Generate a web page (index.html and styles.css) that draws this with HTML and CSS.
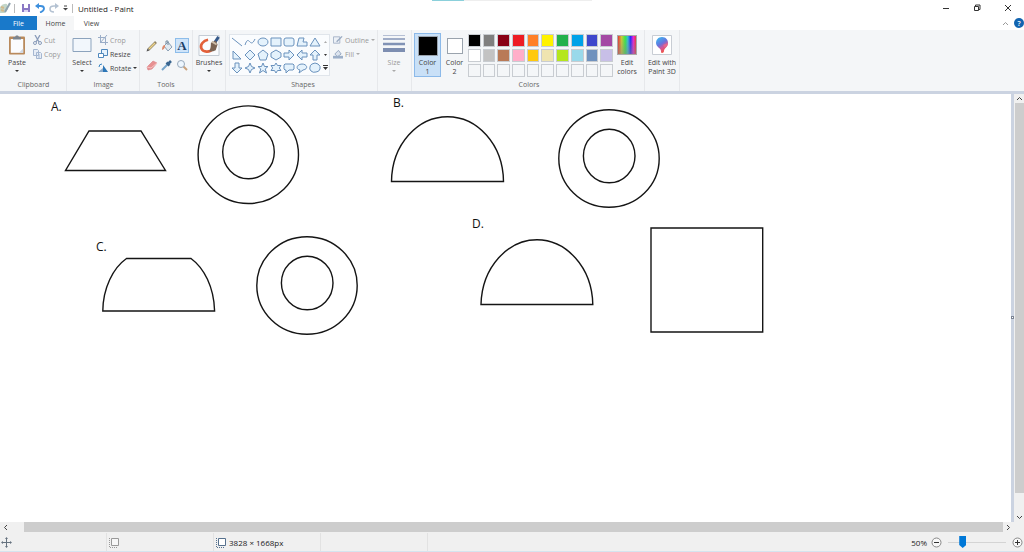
FILE: index.html
```html
<!DOCTYPE html>
<html lang="en">
<head>
<meta charset="utf-8">
<title>Untitled - Paint</title>
<link rel="stylesheet" href="styles.css">
</head>
<body>
<div class="app">
<header class="titlebar">
  <div class="quick">
    <svg class="logo" width="12" height="12" viewBox="0 0 12 12"><path d="M0 5q3-4 7-3l1 5-3 4H0z" fill="#c3d6c9"/><path d="M1 5l3 1M1 8l3 1" stroke="#d3b98a" stroke-width="2"/><path d="M5 10L10 1" stroke="#8fa3ae" stroke-width="2"/></svg>
    <span class="bar"></span>
    <button aria-label="Save"><svg width="10" height="10" viewBox="0 0 10 10"><path d="M1 1h8v8H1z" fill="#8a78c4"/><path d="M3 1h4v4H3z" fill="#fff"/><path d="M3 7h4v2H3z" fill="#ddd6f3"/></svg></button>
    <button aria-label="Undo"><svg width="10" height="10" viewBox="0 0 10 10"><path d="M3 3h2.500q3.500 0 3.500 2.500T5 9.500" fill="none" stroke="#3d8fdd" stroke-width="1.800"/><path d="M0 3l4-3v6z" fill="#3d8fdd"/></svg></button>
    <button aria-label="Redo"><svg width="10" height="10" viewBox="0 0 10 10"><path d="M7 3H5Q1 3 1 6t4 3" fill="none" stroke="#b4c2d2" stroke-width="1.600"/><path d="M10 3L6 0v6z" fill="#b4c2d2"/></svg></button>
    <button aria-label="Customize Quick Access Toolbar"><svg width="5" height="6" viewBox="0 0 5 6"><path d="M1 1h3" stroke="#444"/><path d="M0 3h5L2.500 5.500z" fill="#444"/></svg></button>
    <span class="bar"></span>
    <span class="title">Untitled - Paint</span>
  </div>
  <div class="loading"><i></i></div>
  <div class="window-buttons">
    <button aria-label="Minimize"><svg width="8" height="8"><path d="M1 4.500h6" stroke="#333"/></svg></button>
    <button aria-label="Restore"><svg width="8" height="8"><path d="M1.500 2.500h4v4h-4zM2.500 2V1h4.500v4.500H6" fill="none" stroke="#333"/></svg></button>
    <button aria-label="Close"><svg width="8" height="8"><path d="M1 1l6 6M7 1L1 7" stroke="#333"/></svg></button>
  </div>
</header>
<nav class="tabs">
  <button class="tab file">File</button>
  <button class="tab active">Home</button>
  <button class="tab">View</button>
  <span class="grow"></span>
  <button class="collapse" aria-label="Collapse ribbon"><svg width="7" height="5"><path d="M1 4l2.500-2.500L6 4" fill="none" stroke="#999"/></svg></button>
  <button class="help" aria-label="Help">?</button>
</nav>
<div class="ribbon">
  <section class="group clipboard">
    <div class="content">
      <button class="big"><svg width="18" height="20" viewBox="0 0 18 20"><rect x="1" y="1.500" width="16" height="18" rx="1" fill="#b98a5c"/><path d="M2.800 4h12.400v13.800H2.800z" fill="#fbfcfe"/><path d="M11 17.800l4.200-4.200v4.200z" fill="#cfd8e4"/><path d="M5 2h2l1-1.500h2L11 2h2v2.500H5z" fill="#7d858e"/></svg><span>Paste</span><i class="caret"></i></button>
      <div class="rows">
        <button class="row off"><svg width="9" height="10" viewBox="0 0 9 10"><path d="M2 0l4 7M7 0L3 7" stroke="#8a9cba" stroke-width="1.300"/><circle cx="2" cy="8" r="1.500" fill="none" stroke="#8a9cba"/><circle cx="7" cy="8" r="1.500" fill="none" stroke="#8a9cba"/></svg>Cut</button>
        <button class="row off"><svg width="9" height="10" viewBox="0 0 9 10"><path d="M.5.5h4l1 1v5h-5zM3.500 3.500h4l1 1v5h-5z" fill="#e7edf6" stroke="#a5b7d1"/><path d="M5 6h2M5 8h2" stroke="#a5b7d1"/></svg>Copy</button>
      </div>
    </div>
    <h2>Clipboard</h2>
  </section>
  <section class="group image">
    <div class="content">
      <button class="big"><svg width="20" height="20" viewBox="0 0 20 20"><path d="M1 3.500h18v13H1z" fill="#f2f7fc" stroke="#8ca3bd"/></svg><span>Select</span><i class="caret"></i></button>
      <div class="rows">
        <button class="row off"><svg width="10" height="10" viewBox="0 0 10 10"><path d="M2.500 0v7.500H10M0 2.500h7.500V10M2 8l7-8" fill="none" stroke="#9aadc7"/></svg>Crop</button>
        <button class="row"><svg width="10" height="10" viewBox="0 0 10 10"><path d="M3.500.5h6v6h-6z" fill="#e5f2fd" stroke="#4f88bd"/><path d="M.5 4.500h5v4h-5z" fill="#fff" stroke="#4f88bd"/></svg>Resize</button>
        <button class="row"><svg width="10" height="10" viewBox="0 0 10 10"><path d="M0 9h5V5z" fill="#8eaccb"/><path d="M5 9V2l5 7z" fill="#2c76b7"/><path d="M1 4q0-3 3-3" fill="none" stroke="#3682c1"/></svg>Rotate<i class="caret"></i></button>
      </div>
    </div>
    <h2>Image</h2>
  </section>
  <section class="group tools">
    <div class="content">
      <div class="tool-grid">
        <button aria-label="Pencil"><svg width="12" height="12" viewBox="0 0 12 12"><path d="M2.500 9.500L10 2" stroke="#8d8265" stroke-width="2.600"/><path d="M3 9l6-6" stroke="#edd38a" stroke-width="1.400"/><path d="M.5 11.500l1-3 2 2z" fill="#555"/></svg></button>
        <button aria-label="Fill with color"><svg width="12" height="12" viewBox="0 0 12 12"><path d="M3 6l4-4 4 5-4 4z" fill="#e1eaf2" stroke="#8ba0b5"/><path d="M5 4V1h2v4" fill="none" stroke="#758ba0"/><path d="M4 5Q1 5 1 10q2 0 3-3" fill="#dd8a6c"/></svg></button>
        <button class="selected" aria-label="Text"><span class="letter">A</span></button>
        <button aria-label="Eraser"><svg width="12" height="12" viewBox="0 0 12 12"><path d="M1 8l6-6 4 2-5 6-4 1z" fill="#e79192" stroke="#d98286" stroke-width=".6"/><path d="M1 8l4 1 6-5" fill="none" stroke="#f6c5c5"/></svg></button>
        <button aria-label="Color picker"><svg width="12" height="12" viewBox="0 0 12 12"><path d="M1 11l6-6" stroke="#75a4ca" stroke-width="2"/><path d="M5.500 3.500l3 3M7 5l3-3" stroke="#3a658f" stroke-width="2.600"/></svg></button>
        <button aria-label="Magnifier"><svg width="12" height="12" viewBox="0 0 12 12"><path d="M7 7l4 4" stroke="#c9a27c" stroke-width="2"/><circle cx="5" cy="5" r="3.500" fill="#edf6fe" stroke="#98a9bb"/></svg></button>
      </div>
    </div>
    <h2>Tools</h2>
  </section>
  <section class="group brushes">
    <div class="content">
      <button class="big"><svg width="22" height="22" viewBox="0 0 22 22"><path d="M.5.500h21v21H.5z" fill="#fafcfe" stroke="#c0c8d2"/><path d="M10 5C5 6 1.500 10 3 14s9 5 12 0" fill="none" stroke="#e2603a" stroke-width="2.800"/><path d="M17 8l4-6" stroke="#35598a" stroke-width="3"/><path d="M13 8l5-2 2 4-2 6q-4 2-7 1 2-2 2-9z" fill="#7b6453"/><path d="M14 7l5 3" stroke="#cdbda8" stroke-width="2"/></svg><span>Brushes</span><i class="caret"></i></button>
    </div>
  </section>
  <section class="group shapes">
    <div class="content">
      <div class="gallery">
        <div class="shape-grid">
          <button aria-label="Line"><svg viewBox="0 0 12 12"><path d="M1 2l10 8"/></svg></button>
          <button aria-label="Curve"><svg viewBox="0 0 12 12"><path class="open" d="M1 9C5-3 6 14 11 3"/></svg></button>
          <button aria-label="Oval"><svg viewBox="0 0 12 12"><ellipse cx="6" cy="6" rx="5" ry="4"/></svg></button>
          <button aria-label="Rectangle"><svg viewBox="0 0 12 12"><path d="M1 2h10v8H1z"/></svg></button>
          <button aria-label="Rounded rectangle"><svg viewBox="0 0 12 12"><rect x="1" y="2" width="10" height="8" rx="2"/></svg></button>
          <button aria-label="Polygon"><svg viewBox="0 0 12 12"><path d="M3 2h5L7 6h4v4H1z"/></svg></button>
          <button aria-label="Triangle"><svg viewBox="0 0 12 12"><path d="M6 2l5 8H1z"/></svg></button>
          <button aria-label="Right triangle"><svg viewBox="0 0 12 12"><path d="M2 2l8 8H2z"/></svg></button>
          <button aria-label="Diamond"><svg viewBox="0 0 12 12"><path d="M6 1l5 5-5 5-5-5z"/></svg></button>
          <button aria-label="Pentagon"><svg viewBox="0 0 12 12"><path d="M6 1l5 4-2 6H3L1 5z"/></svg></button>
          <button aria-label="Hexagon"><svg viewBox="0 0 12 12"><path d="M6 1l5 3v4l-5 3-5-3V4z"/></svg></button>
          <button aria-label="Right arrow"><svg viewBox="0 0 12 12"><path d="M1 4h5V1l5 5-5 5V8H1z"/></svg></button>
          <button aria-label="Left arrow"><svg viewBox="0 0 12 12"><path d="M11 4H6V1L1 6l5 5V8h5z"/></svg></button>
          <button aria-label="Up arrow"><svg viewBox="0 0 12 12"><path d="M4 11V6H1l5-5 5 5H8v5z"/></svg></button>
          <button aria-label="Down arrow"><svg viewBox="0 0 12 12"><path d="M4 1v5H1l5 5 5-5H8V1z"/></svg></button>
          <button aria-label="Four-point star"><svg viewBox="0 0 12 12"><path d="M6 1l1.500 3.500L11 6 7.500 7.500 6 11 4.500 7.500 1 6l3.500-1.500z"/></svg></button>
          <button aria-label="Five-point star"><svg viewBox="0 0 12 12"><path d="M6 1l1.500 3.500H11L8.200 7l1.300 4L6 8.500 2.500 11l1.300-4L1 4.500h3.500z"/></svg></button>
          <button aria-label="Six-point star"><svg viewBox="0 0 12 12"><path d="M6 1l1.500 2.500H11L9.300 6 11 8.500H7.500L6 11 4.500 8.500H1L2.700 6 1 3.500h3.500z"/></svg></button>
          <button aria-label="Rectangular callout"><svg viewBox="0 0 12 12"><path d="M2 2h8l1 1v4l-1 1H6l-3 3V8H2L1 7V3z"/></svg></button>
          <button aria-label="Oval callout"><svg viewBox="0 0 12 12"><path d="M4 8C-1 7 1 2 6 2s7 5 1 6l-4 3z"/></svg></button>
          <button aria-label="Cloud callout"><svg viewBox="0 0 12 12"><path d="M3 2q3-2 6 0 3 2 2 5-1 3-4 3-3 1-5-1-2-2-1-4 0-2 2-3z"/></svg></button>
        </div>
        <div class="gallery-scroll">
          <button aria-label="Scroll up"><svg width="3" height="2"><path d="M0 2h3L1.500 0z" fill="#aaa"/></svg></button>
          <button aria-label="Scroll down"><svg width="3" height="2"><path d="M0 0h3L1.500 2z" fill="#333"/></svg></button>
          <button aria-label="More shapes"><svg width="5" height="5"><path d="M0 .500h5" stroke="#333"/><path d="M0 2h5L2.500 5z" fill="#333"/></svg></button>
        </div>
      </div>
      <div class="rows">
        <button class="row off"><svg width="10" height="10" viewBox="0 0 11 10"><path d="M.5 1.500h7v7h-7z" fill="#edf1f7" stroke="#a3b2c7"/><path d="M4 7l6-6" stroke="#98a9c0" stroke-width="1.500"/></svg>Outline<i class="caret"></i></button>
        <button class="row off"><svg width="10" height="10" viewBox="0 0 11 10"><path d="M2 5l4-4 3 4-4 3z" fill="#dce4ef" stroke="#92a5bf"/><path d="M0 7h11v3H0z" fill="#9cafc9"/></svg>Fill<i class="caret"></i></button>
      </div>
    </div>
    <h2>Shapes</h2>
  </section>
  <section class="group size">
    <div class="content">
      <button class="big off"><svg width="22" height="20" viewBox="0 0 22 20"><path d="M0 .500h22" stroke="#b5bfd4"/><path d="M0 4h22" stroke="#8595b7" stroke-width="1.500"/><path d="M0 9h22" stroke="#8092b5" stroke-width="2.500"/><path d="M0 15h22" stroke="#7d8eb1" stroke-width="4"/></svg><span>Size</span><i class="caret"></i></button>
    </div>
  </section>
  <section class="group colors">
    <div class="content">
      <button class="big color chosen"><i class="ink black"></i><span>Color<br>1</span></button>
      <button class="big color"><i class="ink white"></i><span>Color<br>2</span></button>
      <div class="palette">
        <button class="c-black" aria-label="Black"></button><button class="c-gray" aria-label="Gray"></button><button class="c-darkred" aria-label="Dark red"></button><button class="c-red" aria-label="Red"></button><button class="c-orange" aria-label="Orange"></button><button class="c-yellow" aria-label="Yellow"></button><button class="c-green" aria-label="Green"></button><button class="c-turquoise" aria-label="Turquoise"></button><button class="c-indigo" aria-label="Indigo"></button><button class="c-purple" aria-label="Purple"></button>
        <button class="c-white" aria-label="White"></button><button class="c-silver" aria-label="Light gray"></button><button class="c-brown" aria-label="Brown"></button><button class="c-rose" aria-label="Rose"></button><button class="c-gold" aria-label="Gold"></button><button class="c-cream" aria-label="Light yellow"></button><button class="c-lime" aria-label="Lime"></button><button class="c-sky" aria-label="Light turquoise"></button><button class="c-steel" aria-label="Blue-gray"></button><button class="c-lavender" aria-label="Lavender"></button>
        <button aria-label="Custom 1"></button><button aria-label="Custom 2"></button><button aria-label="Custom 3"></button><button aria-label="Custom 4"></button><button aria-label="Custom 5"></button><button aria-label="Custom 6"></button><button aria-label="Custom 7"></button><button aria-label="Custom 8"></button><button aria-label="Custom 9"></button><button aria-label="Custom 10"></button>
      </div>
      <button class="big edit"><i class="spectrum"></i><span>Edit<br>colors</span></button>
    </div>
    <h2>Colors</h2>
  </section>
  <section class="group paint3d">
    <div class="content">
      <button class="big"><svg width="20" height="20" viewBox="0 0 20 20"><defs><linearGradient id="drop" x1="0" y1="0" x2=".5" y2="1"><stop offset="0" stop-color="#35c4f3"/><stop offset=".5" stop-color="#6575df"/><stop offset=".75" stop-color="#d95395"/><stop offset="1" stop-color="#ee5545"/></linearGradient></defs><path d="M.5.500h19v19H.5z" fill="#fff" stroke="#c8cdd4"/><path d="M10 2c4 0 6 3 6 6 0 4-4 5-4 8 0 1-1 2-2 2s-1-1-1-2c0-3-5-4-5-8 0-3 2-6 6-6z" fill="url(#drop)"/><path d="M11 10l5-2q0 3-3 5z" fill="#e4688d"/></svg><span>Edit with<br>Paint 3D</span></button>
    </div>
  </section>
</div>
<main class="workspace">
  <svg class="drawing" role="img" aria-label="Drawing with figures A, B, C and D">
    <g class="figures">
      <path d="M89 37H141L165.500 76.500H65.500Z"/>
      <ellipse cx="248.300" cy="60.700" rx="50.200" ry="48.800"/>
      <ellipse cx="248.500" cy="58" rx="25.800" ry="26.800"/>
      <path d="M391.500 87.500C392 50 418 22.800 447.500 22.800S503 50 503.500 87.500Z"/>
      <ellipse cx="609" cy="64.500" rx="50.200" ry="48.800"/>
      <ellipse cx="609.200" cy="62" rx="25.800" ry="26.800"/>
      <path d="M126.500 164.500H191C204 174 214 193 214.600 217H102.800C103 194 113 174 126.500 164.500Z"/>
      <ellipse cx="307" cy="191.500" rx="50.200" ry="48.800"/>
      <ellipse cx="307.200" cy="189" rx="25.800" ry="26.800"/>
      <path d="M481 210.500C482 173 508 145.800 537 145.800S592 173 592.800 210.500Z"/>
      <path d="M651 134H762.700V238H651Z"/>
    </g>
    <g class="letters"><text x="51" y="17">A.</text><text x="393" y="13">B.</text><text x="96" y="157">C.</text><text x="472" y="134">D.</text></g>
  </svg>
  <div class="edge"><i class="handle"></i></div>
  <div class="vscroll">
    <button aria-label="Scroll up"><svg width="7" height="5"><path d="M1 4l2.500-2.500L6 4" fill="none" stroke="#444"/></svg></button>
    <div class="thumb"></div>
    <button aria-label="Scroll down"><svg width="7" height="5"><path d="M1 1l2.500 2.500L6 1" fill="none" stroke="#444"/></svg></button>
  </div>
</main>
<div class="hscroll">
  <button aria-label="Scroll left"><svg width="5" height="7"><path d="M4 1L1.500 3.500 4 6" fill="none" stroke="#444"/></svg></button>
  <div class="thumb"></div>
  <button aria-label="Scroll right"><svg width="5" height="7"><path d="M1 1l2.500 2.500L1 6" fill="none" stroke="#444"/></svg></button>
</div>
<footer class="status">
  <div class="cell pointer"><svg width="11" height="11" viewBox="0 0 11 11"><path d="M5.500 1v9M1 5.500h9" stroke="#66727f"/><path d="M5.500 0L7 2H4zM5.500 11L7 9H4zM0 5.500L2 4v3zM11 5.500L9 4v3z" fill="#66727f"/></svg></div>
  <div class="cell selection"><svg width="11" height="11" viewBox="0 0 11 11"><path d="M2.500 1.500h7v7h-7z" fill="#f7f7f7" stroke="#999"/><path d="M.5 1v9.500H9" fill="none" stroke="#999" stroke-dasharray="1 1"/></svg></div>
  <div class="cell dimensions"><svg width="11" height="11" viewBox="0 0 11 11"><path d="M2.500 1.500h7v7h-7z" fill="#fff" stroke="#56718e"/><path d="M.5 1v9.500H9" fill="none" stroke="#56718e" stroke-dasharray="1 1"/></svg><span>3828 × 1668px</span></div>
  <div class="cell filesize"></div>
  <div class="zoom">
    <label for="zoom">50%</label>
    <button aria-label="Zoom out"><svg width="11" height="11"><circle cx="5.500" cy="5.500" r="4.500" fill="#f8f8f8" stroke="#888"/><path d="M3 5.500h5" stroke="#333"/></svg></button>
    <input id="zoom" type="range" min="0" max="100" value="22">
    <button aria-label="Zoom in"><svg width="11" height="11"><circle cx="5.500" cy="5.500" r="4.500" fill="#f8f8f8" stroke="#888"/><path d="M3 5.500h5M5.500 3v5" stroke="#333"/></svg></button>
  </div>
</footer>
</div>
</body>
</html>
```
FILE: styles.css
```css
* { box-sizing: border-box; }
body { margin: 0; background: #fff; color: #444; font: 7px/9px "Open Sans", "Noto Sans", sans-serif; }
button { display: flex; align-items: center; justify-content: center; margin: 0; padding: 0; border: 0; background: none; color: inherit; font: inherit; }
svg { display: block; flex: none; }
.app { display: flex; flex-direction: column; min-height: 100vh; }
.grow { flex: 1; }

.titlebar { display: grid; grid-template-columns: 1fr auto 1fr; height: 16px; }
.quick { display: flex; align-items: center; gap: 4px; }
.logo { margin-right: -2px; }
.bar { width: 1px; height: 9px; margin-right: 2px; background: #bbb; }
.quick .bar + .title { margin-left: -1px; }
.title { color: #222; font-size: 8px; white-space: nowrap; }
.loading { width: 160px; height: 1px; margin: 0 72px; background: #eee; }
.loading i { display: block; width: 32px; height: 1px; background: #8bd0db; }
.window-buttons { display: flex; justify-content: flex-end; align-items: center; gap: 23px; padding-right: 12px; }

.tabs { display: flex; height: 14px; align-items: center; }
.tab { width: 35px; height: 14px; }
.tab.file { width: 37px; background: #1979ca; color: #fff; }
.tab.active { width: 37px; background: #f5f6f7; }
.collapse { margin-right: 5px; }
.help { width: 10px; height: 10px; border-radius: 50%; background: #1264b0; color: #fff; font-weight: 600; }

.ribbon { display: flex; height: 64px; border-bottom: 3px solid #cbd3e1; background: #f4f6f8; }
.group { display: flex; flex-direction: column; flex: none; padding-top: 3px; border-right: 1px solid #e6e8eb; }
.content { display: flex; height: 46px; }
.group h2 { margin: 0; font: inherit; line-height: 12px; text-align: center; color: #666; }
.big { flex-direction: column; justify-content: flex-start; width: 32px; height: 44px; padding-top: 2px; }
.big svg { height: 20px; }
.big span { margin-top: 3px; }
.caret { width: 0; height: 0; margin-top: 3px; border: 2px solid transparent; border-top-color: #333; border-bottom: 0; }
.rows { display: flex; flex-direction: column; }
.row { justify-content: flex-start; gap: 2px; height: 14px; white-space: nowrap; }
.row .caret { margin: 0; }
.off { color: #999; }
.off .caret { border-top-color: #aaa; }
.clipboard { width: 67px; padding-left: 1px; }
.image { width: 73px; padding-left: 1px; }
.image .big { width: 28px; }
.image .rows { padding-left: 2px; }
.tools { width: 53px; }
.tool-grid { display: grid; grid-template-columns: repeat(3, 14px); grid-auto-rows: 15px; gap: 4px 1px; padding: 5px 0 0 5px; }
.selected { border: 1px solid #8dbdea; background: #cfe4f9; }
.letter { font: bold 13px/13px "Liberation Serif", serif; color: #1c3f68; }
.brushes { width: 33px; }
.brushes .big svg { height: 21px; }
.brushes .big span { margin-top: 2px; }
.shapes { width: 152px; padding-left: 3px; }
.gallery { display: flex; width: 101px; height: 42px; margin: 1px 3px 0 0; border: 1px solid #e0e5eb; background: #fafcfe; }
.shape-grid { display: grid; grid-template-columns: repeat(7, 13px); grid-auto-rows: 13px; }
.shape-grid svg { width: 12px; height: 12px; fill: #e4f2fc; stroke: #6a92bd; stroke-width: 1; }
.shape-grid .open { fill: none; }
.gallery-scroll { display: grid; flex: 1; grid-auto-rows: 13px; }
.size { width: 34px; }
.colors { width: 233px; padding-left: 2px; }
.color { width: 27px; border: 1px solid transparent; padding-top: 2px; }
.chosen { border-color: #8bb9e9; background: #c9e0f7; }
.ink { width: 20px; height: 20px; border: 1px solid #9aa3ad; }
.color .ink + span { margin-top: 2px; }
.ink.black { background: #000; }
.ink.white { width: 16px; height: 16px; margin: 2px 0; background: #fff; }
.palette { display: grid; grid-template-columns: repeat(10, 1fr); grid-auto-rows: 13px; gap: 2px; width: 145px; padding-top: 1px; }
.palette button { border: 1px solid #c8ccd1; }
.edit { width: 28px; }
.spectrum { width: 20px; height: 20px; border: 1px solid #aaa; background: linear-gradient(transparent, #8888), linear-gradient(90deg, #e33, #cc3 20%, #3e4 40%, #3bd 55%, #22f 70%, #e2d 85%, #e33); }
.c-black { background: #000; }
.c-gray { background: #7f7f7f; }
.c-darkred { background: #880015; }
.c-red { background: #ed1c24; }
.c-orange { background: #ff7f27; }
.c-yellow { background: #fff200; }
.c-green { background: #22b14c; }
.c-turquoise { background: #00a2e8; }
.c-indigo { background: #3f48cc; }
.c-purple { background: #a349a4; }
.c-white { background: #fff; }
.c-silver { background: #c3c3c3; }
.c-brown { background: #b97a57; }
.c-rose { background: #ffaec9; }
.c-gold { background: #ffc90e; }
.c-cream { background: #efe4b0; }
.c-lime { background: #b5e61d; }
.c-sky { background: #99d9ea; }
.c-steel { background: #7092be; }
.c-lavender { background: #c8bfe7; }
.paint3d { width: 35px; }
.paint3d .big { width: 34px; white-space: nowrap; }

.workspace { display: flex; flex: 1; }
.drawing { flex: 1; min-width: 0; height: auto; min-height: 260px; }
.figures { fill: none; stroke: #151515; stroke-width: 1.4; }
.letters { fill: #111; font: 12px "Open Sans", sans-serif; }
.edge { display: flex; align-items: center; width: 3px; padding-top: 18px; background: #cbd3e1; }
.handle { width: 3px; height: 3px; border: 1px solid #7b8494; background: #fff; }
.vscroll { display: flex; flex-direction: column; width: 10px; background: #f0f0f0; }
.vscroll button { height: 9px; }
.vscroll .thumb { flex: 1; margin: 0 0 20px 1px; background: #cdcdcd; }
.hscroll { display: flex; height: 11px; padding: 0 11px 1px 0; background: #f0f0f0; }
.hscroll button { width: 10px; }
.hscroll .thumb { flex: 1; margin-left: 14px; background: #cdcdcd; }
.status { display: flex; height: 19px; align-items: stretch; border-bottom: 1px solid #d5e4ef; background: #f0f0f0; color: #222; font-size: 8px; }
.cell { display: flex; align-items: center; gap: 2px; width: 107px; padding-left: 2px; border-right: 1px solid #e2e2e2; }
.pointer { padding-left: 1px; }
.zoom { display: flex; align-items: center; gap: 4px; margin-left: auto; padding-right: 1px; }
.zoom input { appearance: none; width: 58px; height: 12px; margin: 0 2px; background: linear-gradient(#d4d4d4, #d4d4d4) center / 100% 1px no-repeat; }
.zoom input::-webkit-slider-thumb { appearance: none; width: 7px; height: 12px; background: #0078d7; clip-path: polygon(0 0, 100% 0, 100% 75%, 50% 100%, 0 75%); }
```
